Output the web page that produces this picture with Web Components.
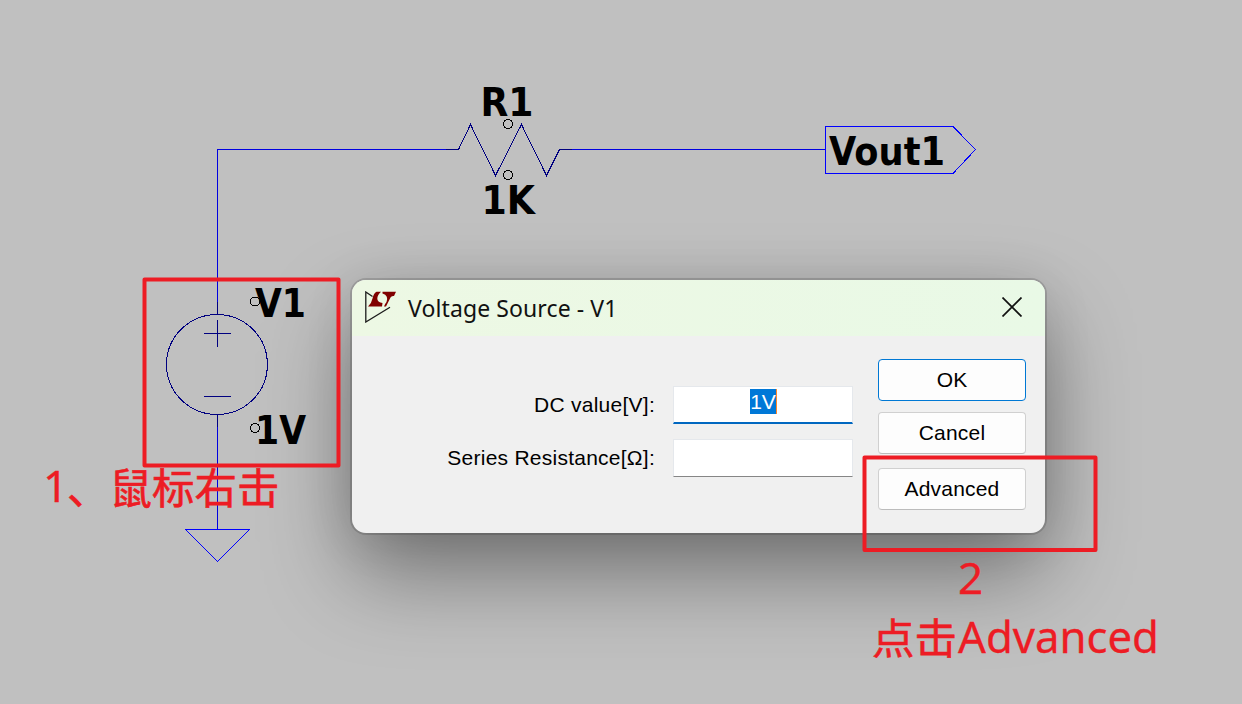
<!DOCTYPE html>
<html lang="zh-CN">
<head>
<meta charset="utf-8">
<title>Voltage Source - V1</title>
<style>
  body {
    margin: 0;
    width: 1242px;
    height: 704px;
    overflow: hidden;
    background: #c0c0c0;
    font-family: "Liberation Sans", Arial, sans-serif;
  }
</style>
</head>
<body>
<schematic-desktop>
  <schematic-sheet></schematic-sheet>
  <app-dialog slot="window" heading="Voltage Source - V1">
    <value-field label="DC value[V]:" value="1V" focused></value-field>
    <value-field label="Series Resistance[Ω]:"></value-field>
    <dialog-button slot="actions" primary>OK</dialog-button>
    <dialog-button slot="actions">Cancel</dialog-button>
    <dialog-button slot="actions" class="last">Advanced</dialog-button>
  </app-dialog>
  <markup-layer slot="notes"></markup-layer>
</schematic-desktop>

<script>
class SchematicDesktop extends HTMLElement {
  constructor() {
    super();
    this.attachShadow({ mode: 'open' }).innerHTML = `
      <style>
        :host { display: block; position: relative; width: 1242px; height: 704px; overflow: hidden; }
        slot[name="window"]::slotted(*) { position: absolute; left: 352px; top: 280px; }
        slot[name="notes"]::slotted(*) { position: absolute; inset: 0; pointer-events: none; }
      </style>
      <slot></slot>
      <slot name="window"></slot>
      <slot name="notes"></slot>
    `;
  }
}

class SchematicSheet extends HTMLElement {
  constructor() {
    super();
    this.attachShadow({ mode: 'open' }).innerHTML = `
      <style>
        :host { display: block; }
        svg { display: block; }
        .wire, .part, .anchor { fill: none; stroke-width: 1; shape-rendering: crispEdges; }
        .wire { stroke: #0000e0; }
        .part { stroke: #000080; }
        .port { stroke: #0000ff; }
        .anchor { stroke: #000; }
        text { font: bold 38.5px "DejaVu Sans", sans-serif; fill: #000; }
      </style>
      <svg width="1242" height="704" viewBox="0 0 1242 704">
        <!-- wires -->
        <path class="wire" d="M217.5 302V149.5H446M572 149.5H825M217.5 427V529.5"/>
        <!-- resistor -->
        <path class="part" d="M446 149.5H458.5L470.5 124.5L495.5 175.5L521.5 124.5L546.5 175.5L559.5 149.5H572"/>
        <!-- voltage source -->
        <path class="part" d="M217.5 302V315M217.5 414V427M204 333.5H231M217.5 320V347M204 396.5H231"/>
        <ellipse class="part" cx="217" cy="364.5" rx="50.5" ry="50"/>
        <!-- ground -->
        <path class="wire port" d="M185.5 529.5H249.5L217.5 561.5Z"/>
        <!-- output port -->
        <path class="wire port" d="M825.5 126.5H953L975.5 149.5L953 173.5H825.5Z"/>
        <circle class="anchor" cx="508" cy="124" r="4.5"/>
        <circle class="anchor" cx="508" cy="175" r="4.5"/>
        <circle class="anchor" cx="255" cy="301.5" r="4.5"/>
        <circle class="anchor" cx="255" cy="428" r="4.5"/>
        <text x="480.5" y="116" textLength="53" lengthAdjust="spacingAndGlyphs">R1</text>
        <text x="481.5" y="214" textLength="53.5" lengthAdjust="spacingAndGlyphs">1K</text>
        <text x="255" y="317" textLength="51" lengthAdjust="spacingAndGlyphs">V1</text>
        <text x="255" y="444" textLength="51" lengthAdjust="spacingAndGlyphs">1V</text>
        <text x="829" y="165" textLength="116" lengthAdjust="spacingAndGlyphs">Vout1</text>
      </svg>
    `;
  }
}

class AppDialog extends HTMLElement {
  connectedCallback() {
    this.attachShadow({ mode: 'open' }).innerHTML = `
      <style>
        :host {
          display: flex;
          flex-direction: column;
          width: 693px;
          height: 253px;
          border-radius: 14px;
          background: #f0f0f0;
          box-shadow: 0 0 0 2px rgba(0,0,0,.14), 0 40px 88px rgba(0,0,0,.4), 0 4px 50px rgba(0,0,0,.1);
        }
        header {
          display: flex;
          align-items: center;
          height: 56px;
          box-sizing: border-box;
          padding: 0 23px 2px 12px;
          border-radius: 14px 14px 0 0;
          background: linear-gradient(90deg, #edf8e4, #e9f9e6);
        }
        h1 {
          flex: 1;
          margin: 2px 0 0 12px;
          font: 400 23px/32px "Noto Sans", sans-serif;
          letter-spacing: .1px;
          color: #111;
          white-space: nowrap;
        }
        main { flex: 1; display: flex; padding: 23px 19px 0 0; }
        .fields { flex: 1; display: flex; flex-direction: column; gap: 15px; padding: 27px 25px 0 0; }
        .actions { display: flex; flex-direction: column; width: 148px; gap: 11px; }
        .actions ::slotted(.last) { margin-top: 3px; }
        svg { display: block; }
      </style>
      <header>
        <svg width="32" height="32" viewBox="0 0 32 32">
          <path d="M8.500 5.500L1.800 1V31L26 16.300" fill="none" stroke="#1c1c1c" stroke-width="1.300"/>
          <path d="M12.500 .8H17Q13.200 4 13.300 8Q13.800 11.500 18.500 12L18 15.500H4Q7.500 12.500 8.500 7.500Q9.500 2.500 12.500 .8Z" fill="#800000"/>
          <path d="M18.500 .8H32L30 5Q27.500 4.500 26.500 6.500L22 15.500H20Q20.500 13.500 22.500 11Q25 4.500 18.500 2.500Z" fill="#800000"/>
        </svg>
        <h1>${this.getAttribute('heading')}</h1>
        <svg width="20" height="20" viewBox="0 0 20 20">
          <path d="M.5 .5L19.500 19.500M19.500 .5L.5 19.500" stroke="#111" stroke-width="1.700"/>
        </svg>
      </header>
      <main>
        <div class="fields"><slot></slot></div>
        <div class="actions"><slot name="actions"></slot></div>
      </main>
    `;
  }
}

class ValueField extends HTMLElement {
  connectedCallback() {
    const value = this.getAttribute('value');
    this.attachShadow({ mode: 'open' }).innerHTML = `
      <style>
        :host { display: flex; justify-content: flex-end; height: 38px; }
        label { font-size: 21px; line-height: 38px; letter-spacing: .25px; color: #000; white-space: nowrap; }
        .box {
          width: 180px;
          height: 38px;
          box-sizing: border-box;
          margin-left: 18px;
          border: 1px solid #e5e8ec;
          border-bottom: 1px solid #868686;
          background: #fff;
          text-align: center;
        }
        :host([focused]) .box { border-bottom: 2px solid #0067c0; }
        .selected {
          display: inline-block;
          height: 25px;
          margin: 2px 0 0 1px;
          border-right: 1px solid #ff8728;
          background: #0078d7;
          color: #fff;
          font-size: 21px;
          line-height: 25px;
        }
      </style>
      <label>${this.getAttribute('label')}</label>
      <div class="box">${value ? `<span class="selected">${value}</span>` : ''}</div>
    `;
  }
}

class DialogButton extends HTMLElement {
  constructor() {
    super();
    this.attachShadow({ mode: 'open' }).innerHTML = `
      <style>
        :host { display: block; }
        button {
          display: block;
          width: 148px;
          height: 42px;
          padding: 0;
          border: 1px solid #d0d0d0;
          border-bottom-color: #bcbcbc;
          border-radius: 4px;
          background: #fdfdfd;
          color: #000;
          font: 21px/38px "Liberation Sans", Arial, sans-serif;
          letter-spacing: .2px;
        }
        :host([primary]) button { border-color: #0078d4; }
      </style>
      <button type="button"><slot></slot></button>
    `;
  }
}

class MarkupLayer extends HTMLElement {
  constructor() {
    super();
    this.attachShadow({ mode: 'open' }).innerHTML = `
      <style>
        :host { display: block; }
        svg { display: block; }
        rect { fill: none; stroke: #ed1c24; stroke-width: 4; stroke-linejoin: round; }
        text { font: 44px "Noto Sans", "Noto Sans CJK SC", sans-serif; fill: #ed1c24; stroke: #ed1c24; stroke-width: .3; }
        .cjk { font-family: "Noto Sans CJK SC", sans-serif; font-size: 42.500px; stroke-width: .6; }
      </style>
      <svg width="1242" height="704" viewBox="0 0 1242 704">
        <rect x="144.500" y="279.500" width="194" height="186"/>
        <rect x="864.500" y="457.500" width="231" height="92.500"/>
        <text x="43" y="502">1</text>
        <text class="cjk" x="67" y="504">、鼠标右击</text>
        <text x="958" y="594">2</text>
        <text class="cjk" x="872" y="654">点击</text>
        <text x="958" y="653" textLength="201" lengthAdjust="spacingAndGlyphs">Advanced</text>
      </svg>
    `;
  }
}

customElements.define('schematic-desktop', SchematicDesktop);
customElements.define('schematic-sheet', SchematicSheet);
customElements.define('app-dialog', AppDialog);
customElements.define('value-field', ValueField);
customElements.define('dialog-button', DialogButton);
customElements.define('markup-layer', MarkupLayer);
</script>
</body>
</html>
